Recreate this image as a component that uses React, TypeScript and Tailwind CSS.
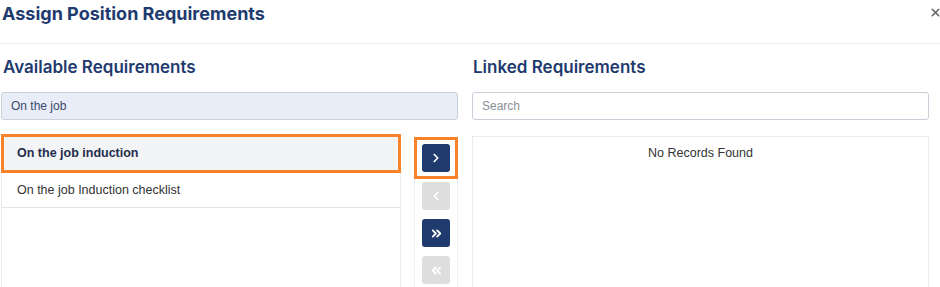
import { ChevronLeft, ChevronRight, ChevronsLeft, ChevronsRight, X } from "lucide-react";

const heading = "font-['Inter',sans-serif] text-[#1e3a6e]";

function MoveButton({ active, children }: { active: boolean; children: React.ReactNode }) {
  return (
    <div
      className={`flex h-[28px] w-[28px] items-center justify-center rounded-[3px] text-white ${
        active ? "bg-[#1f3a6d]" : "bg-[#dedede]"
      }`}
    >
      {children}
    </div>
  );
}

export default function App() {
  return (
    <div className="relative h-[287px] w-[940px] overflow-hidden bg-white font-['Liberation_Sans',Arial,sans-serif]">
      {/* Modal header */}
      <div className="flex h-[44px] items-start justify-between border-b border-[#f1f1f1]">
        <h1 className={`${heading} pl-[2px] pt-[3px] text-[18px] font-bold leading-[22px]`}>
          Assign Position Requirements
        </h1>
        <X className="-mr-[2px] mt-[6px] h-[13px] w-[13px] text-[#666]" strokeWidth={3} />
      </div>

      <div className="flex gap-[14px] pl-[1px]">
        {/* Available */}
        <div className="w-[457px]">
          <h2 className={`${heading} pl-[2px] pt-[12px] text-[17px] font-semibold leading-[22px]`}>
            Available Requirements
          </h2>
          <div className="mt-[14px] flex h-[28px] items-center rounded-[3px] border border-[#c9cfd8] bg-[#e8edf8] px-[9px] text-[12px] text-[#3a4a6b]">
            On the job
          </div>
          <div className="mt-[16px] flex gap-[13px]">
            <div className="h-[160px] w-[400px] border-x border-[#ececec]">
              <div className="-mx-px -mt-[2px] flex h-[39px] items-center border-[3px] border-[#f7822a] bg-[#f3f4f6] pl-[13px] text-[12.5px] font-bold text-[#1f2d4d]">
                On the job induction
              </div>
              <div className="flex h-[35px] items-center border-b border-[#e4e4e4] pl-[15px] text-[12.5px] text-[#333]">
                On the job Induction checklist
              </div>
            </div>
            <div className="flex h-[160px] w-[44px] flex-col items-center border-x border-[#efefef] pt-[1px]">
              <div className="flex h-[42px] w-[44px] items-center justify-center border-[3px] border-[#f7822a]">
                <MoveButton active>
                  <ChevronRight className="h-[14px] w-[14px]" strokeWidth={3} />
                </MoveButton>
              </div>
              <div className="mt-[3px]">
                <MoveButton active={false}>
                  <ChevronLeft className="h-[14px] w-[14px]" strokeWidth={3} />
                </MoveButton>
              </div>
              <div className="mt-[9px]">
                <MoveButton active>
                  <ChevronsRight className="h-[15px] w-[15px]" strokeWidth={3} />
                </MoveButton>
              </div>
              <div className="mt-[9px]">
                <MoveButton active={false}>
                  <ChevronsLeft className="h-[15px] w-[15px]" strokeWidth={3} />
                </MoveButton>
              </div>
            </div>
          </div>
        </div>

        {/* Linked */}
        <div className="w-[457px]">
          <h2 className={`${heading} pl-[1px] pt-[12px] text-[17px] font-semibold leading-[22px]`}>
            Linked Requirements
          </h2>
          <div className="mt-[14px] flex h-[28px] items-center rounded-[3px] border border-[#c9cfd8] bg-white px-[9px] text-[12px] text-[#8a8f98]">
            Search
          </div>
          <div className="mt-[16px] h-[160px] border border-[#ececec] pt-[7px] text-center text-[12.5px] text-[#333]">
            No Records Found
          </div>
        </div>
      </div>
    </div>
  );
}
